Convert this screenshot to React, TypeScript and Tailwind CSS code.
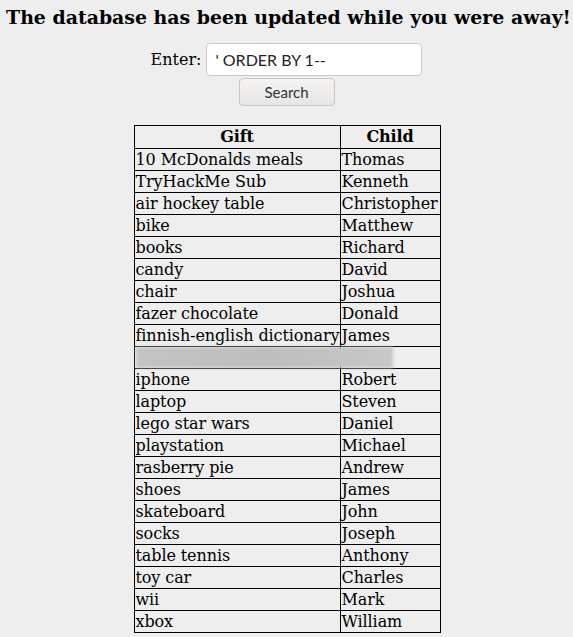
const rows: [string, string][] = [
  ['10 McDonalds meals', 'Thomas'],
  ['TryHackMe Sub', 'Kenneth'],
  ['air hockey table', 'Christopher'],
  ['bike', 'Matthew'],
  ['books', 'Richard'],
  ['candy', 'David'],
  ['chair', 'Joshua'],
  ['fazer chocolate', 'Donald'],
  ['finnish-english dictionary', 'James'],
  ['', ''],
  ['iphone', 'Robert'],
  ['laptop', 'Steven'],
  ['lego star wars', 'Daniel'],
  ['playstation', 'Michael'],
  ['rasberry pie', 'Andrew'],
  ['shoes', 'James'],
  ['skateboard', 'John'],
  ['socks', 'Joseph'],
  ['table tennis', 'Anthony'],
  ['toy car', 'Charles'],
  ['wii', 'Mark'],
  ['xbox', 'William'],
];

export default function App() {
  return (
    <div className="min-h-[637px] w-[573px] bg-[#eeeeee] font-['DejaVu_Serif',serif] text-black">
      <h3 className="pl-[4px] pt-[6px] text-center text-[18.9px] font-bold leading-[22px]">
        The database has been updated while you were away!
      </h3>

      <form className="mt-[15px] flex flex-col items-center" onSubmit={(e) => e.preventDefault()}>
        <div className="flex items-center gap-[5px]">
          <label className="text-[16px]">Enter:</label>
          <input
            defaultValue="' ORDER BY 1--"
            className="h-[33px] w-[216px] rounded-[4px] border border-[#cdc7c2] bg-white px-[8px] font-['Lato',sans-serif] text-[16px] text-[#1e2224] outline-none"
          />
        </div>
        <button
          type="submit"
          className="mt-[2px] h-[28px] w-[96px] rounded-[4px] border border-[#cdc7c2] bg-gradient-to-b from-[#f4f3f2] to-[#e8e6e4] font-['Lato',sans-serif] text-[15px] text-[#2e3436]"
        >
          Search
        </button>
      </form>

      <div className="mt-[19px] flex justify-center">
        <div className="relative ml-[1px]">
          <table className="w-[307px] table-fixed border-collapse border border-black text-[16px] leading-[20px] tracking-[-0.1px]">
            <colgroup>
              <col className="w-[206px]" />
              <col />
            </colgroup>
            <thead>
              <tr className="h-[23px]">
                <th className="border border-black px-[1px] font-bold">Gift</th>
                <th className="border border-black px-[1px] font-bold">Child</th>
              </tr>
            </thead>
            <tbody>
              {rows.map(([gift, child], i) => (
                <tr key={i} className="h-[22px]">
                  <td className="whitespace-nowrap border border-black px-[1px] py-0">{gift}</td>
                  <td className="whitespace-nowrap border border-black px-[1px] py-0">{child}</td>
                </tr>
              ))}
            </tbody>
          </table>
          <div className="absolute left-[2px] top-[222px] h-[21px] w-[257px] bg-gradient-to-r from-[#c4c4c4] via-[#bdbdbd] to-[#c8c8c8] blur-[1.5px]" />
        </div>
      </div>
    </div>
  );
}
